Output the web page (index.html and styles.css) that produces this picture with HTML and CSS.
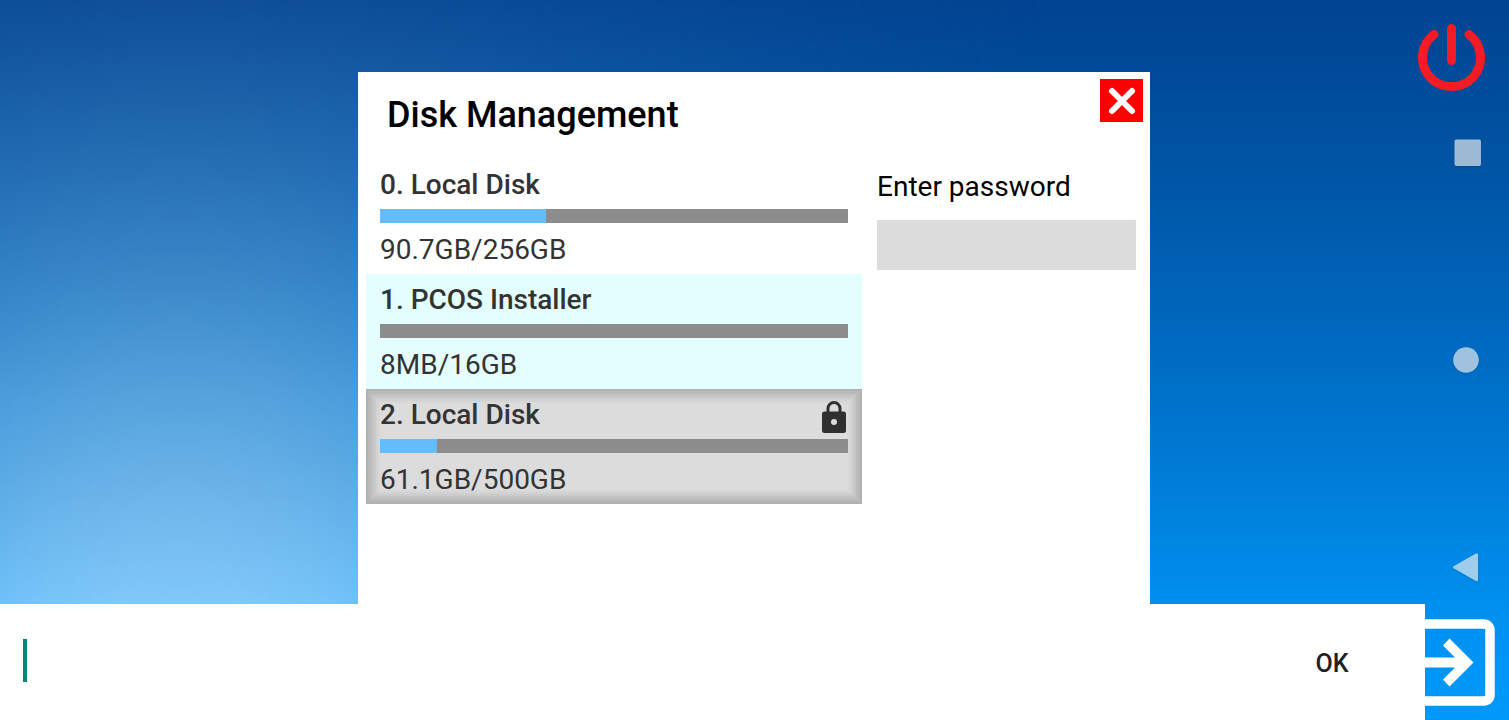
FILE: index.html
```html
<!DOCTYPE html>
<html lang="en">
<head>
<meta charset="utf-8">
<meta name="viewport" content="width=device-width, initial-scale=1">
<title>Disk Management</title>
<link rel="stylesheet" href="styles.css">
</head>
<body>
<div class="desktop">
  <div class="shortcuts">
    <button class="icon-button power" type="button" aria-label="Power">
      <svg viewBox="0 0 68 68" fill="none" stroke="#f31c24" stroke-width="9" stroke-linecap="round"><path d="M17 10.500A29 29 0 1 0 52 10.500M34.500 4.500V36.500"/></svg>
    </button>
    <button class="icon-button exit" type="button" aria-label="Exit">
      <svg viewBox="0 0 88 88" fill="none" stroke="#fff"><path d="M5 20V12a6 6 0 0 1 6-6H77a6 6 0 0 1 6 6V77a6 6 0 0 1-6 6H11a6 6 0 0 1-6-6V68" stroke-width="9.500"/><path d="M0 39.500H48L36 27.500L42.500 20.500L66.500 44.500L42.500 68.500L36 61.500L48 49.500H0Z" fill="#fff" stroke="none"/></svg>
    </button>
  </div>

  <main class="stage">
    <section class="dialog" aria-labelledby="title">
      <header class="dialog-head">
        <h1 class="title" id="title">Disk Management</h1>
        <button class="icon-button close" type="button" aria-label="Close">
          <svg viewBox="0 0 43 43" fill="none" stroke="#fff" stroke-width="6" stroke-linecap="round"><path d="M12 12L32 32M32 12L12 32"/></svg>
        </button>
      </header>
      <div class="dialog-body">
        <ul class="disks">
          <li class="disk">
            <h2 class="disk-name">0. Local Disk</h2>
            <div class="meter"><div class="used" style="width:35.4%"></div></div>
            <p class="size">90.7GB/256GB</p>
          </li>
          <li class="disk hover">
            <h2 class="disk-name">1. PCOS Installer</h2>
            <div class="meter"><div class="used" style="width:0%"></div></div>
            <p class="size">8MB/16GB</p>
          </li>
          <li class="disk selected">
            <h2 class="disk-name">2. Local Disk
              <svg class="lock" viewBox="0 0 24 32" aria-hidden="true"><path d="M6 12V7.500a6 6 0 0 1 12 0V12" fill="none" stroke="#303030" stroke-width="3"/><rect y="10.500" width="24" height="21.500" rx="2.500" fill="#303030"/><circle cx="12" cy="21" r="3" fill="#dcdcdc"/></svg>
            </h2>
            <div class="meter"><div class="used" style="width:12.2%"></div></div>
            <p class="size">61.1GB/500GB</p>
          </li>
        </ul>
        <form class="unlock">
          <label class="label" for="password">Enter password</label>
          <input class="password" id="password" type="password">
        </form>
      </div>
    </section>
  </main>

  <nav class="system-nav" aria-label="System">
    <button class="icon-button nav-button" type="button" aria-label="Recent apps">
      <svg viewBox="0 0 46 46"><rect x="11.500" y="9.500" width="26.500" height="26.500" rx="2" fill="#fff" fill-opacity=".62"/></svg>
    </button>
    <button class="icon-button nav-button" type="button" aria-label="Home">
      <svg viewBox="0 0 46 46"><circle cx="23" cy="23" r="12.800" fill="#fff" fill-opacity=".62"/></svg>
    </button>
    <button class="icon-button nav-button" type="button" aria-label="Back">
      <svg viewBox="0 0 46 46"><path d="M11 22L33 9.500Q35 8.500 35 11V35.500Q35 38 33 37L11 24.500Q9 23.200 11 22Z" fill="#fff" fill-opacity=".62"/></svg>
    </button>
  </nav>

  <form class="ime">
    <input class="ime-text" type="text" aria-label="Text entry">
    <button class="ime-ok" type="button">OK</button>
  </form>
</div>
</body>
</html>
```
FILE: styles.css
```css
* { box-sizing: border-box; }

body {
  margin: 0;
  font-family: Roboto, "Liberation Sans", sans-serif;
}

.desktop {
  position: relative;
  display: flex;
  flex-direction: column;
  height: 100vh;
  overflow: hidden;
  background: linear-gradient(#004391, #0055a5 24%, #0068be 46%, #0080dc 70%, #0090f0 85%, #009afa);
}

/* Pale glow rising from the lower left of the wallpaper */
.desktop::before {
  content: "";
  position: absolute;
  inset: 0;
  background: linear-gradient(#15549d, #2469ad 14%, #367dbf 28%, #4893cf 42%, #5ea8df 56%, #74b9eb 70%, #84cafa 84%);
  -webkit-mask-image: radial-gradient(ellipse 900px 2400px at 180px 720px, #000, rgba(0, 0, 0, .97) 8%, rgba(0, 0, 0, .9) 16%, rgba(0, 0, 0, .8) 24%, rgba(0, 0, 0, .6) 37%, rgba(0, 0, 0, .4) 50%, rgba(0, 0, 0, .15) 75%, transparent);
  mask-image: radial-gradient(ellipse 900px 2400px at 180px 720px, #000, rgba(0, 0, 0, .97) 8%, rgba(0, 0, 0, .9) 16%, rgba(0, 0, 0, .8) 24%, rgba(0, 0, 0, .6) 37%, rgba(0, 0, 0, .4) 50%, rgba(0, 0, 0, .15) 75%, transparent);
}

.icon-button {
  display: block;
  flex: none;
  padding: 0;
  border: 0;
  background: none;
}

.icon-button svg {
  display: block;
  width: 100%;
  height: 100%;
}

.shortcuts {
  position: absolute;
  inset: 0 0 0 auto;
  display: flex;
  flex-direction: column;
  align-items: center;
  justify-content: space-between;
  width: 116px;
  padding: 24px 0 14px;
}

.power { width: 68px; height: 68px; }
.exit { width: 88px; height: 88px; }

.stage {
  position: relative;
  display: grid;
  flex: 1;
  place-items: center;
  padding-right: 1px;
}

.dialog {
  width: 792px;
  max-width: 100%;
  height: 80vh;
  background: #fff;
}

.dialog-head {
  display: flex;
  justify-content: space-between;
  padding: 7px 7px 0 29px;
}

.title {
  margin: 0;
  padding-top: 14px;
  font-size: 36px;
  font-weight: 500;
  line-height: 44px;
}

.close {
  width: 43px;
  height: 43px;
  background: #f00;
}

.dialog-body {
  display: flex;
  gap: 15px;
  padding: 22px 14px 0 8px;
}

.disks {
  flex: 1;
  margin: 0;
  padding: 0;
  list-style: none;
  color: #333;
}

.disk {
  height: 115px;
  padding: 8px 14px 0;
}

.hover { background: #e4ffff; }

.selected {
  background: #dcdcdc;
  box-shadow:
    inset 0 0 0 2px rgba(0, 0, 0, .03),
    inset 0 0 0 4px rgba(0, 0, 0, .03),
    inset 0 0 0 6px rgba(0, 0, 0, .03),
    inset 0 0 0 8px rgba(0, 0, 0, .03),
    inset 0 0 0 10px rgba(0, 0, 0, .03),
    inset 0 0 0 12px rgba(0, 0, 0, .02),
    inset 0 0 0 14px rgba(0, 0, 0, .02);
}

.disk-name {
  display: flex;
  justify-content: space-between;
  height: 42px;
  margin: 0;
  font-size: 28px;
  font-weight: 500;
  line-height: 36px;
}

.lock {
  width: 24px;
  height: 32px;
  margin: 4px 2px 0 0;
}

.meter {
  height: 14px;
  background: #8c8c8c;
}

.used {
  height: 100%;
  background: #64bcff;
}

.size {
  margin: 0;
  padding-top: 9px;
  font-size: 28px;
  line-height: 36px;
}

.unlock {
  display: flex;
  flex-direction: column;
  gap: 15px;
  width: 259px;
  padding-top: 10px;
}

.label {
  font-size: 28px;
  line-height: 36px;
}

.password {
  width: 100%;
  height: 50px;
  border: 0;
  background: #dcdcdc;
}

.system-nav {
  position: absolute;
  inset: 0 20px 0 auto;
  display: flex;
  flex-direction: column;
  justify-content: space-between;
  padding: 130px 0;
}

.nav-button {
  width: 46px;
  height: 46px;
  filter: drop-shadow(0 1px 1px rgba(0, 0, 0, .2));
}

.ime {
  position: absolute;
  inset: auto 84px 0 0;
  display: flex;
  align-items: center;
  height: 116px;
  padding: 0 60px 4px 23px;
  background: #fff;
}

.ime-text {
  flex: 1;
  height: 43px;
  border: 0;
  border-left: 4px solid #008577;
  outline: 0;
  background: none;
}

.ime-ok {
  width: 66px;
  height: 48px;
  padding: 8px 0 0;
  border: 0;
  background: none;
  color: #212121;
  font: 500 25px/30px Roboto, "Liberation Sans", sans-serif;
}
```
